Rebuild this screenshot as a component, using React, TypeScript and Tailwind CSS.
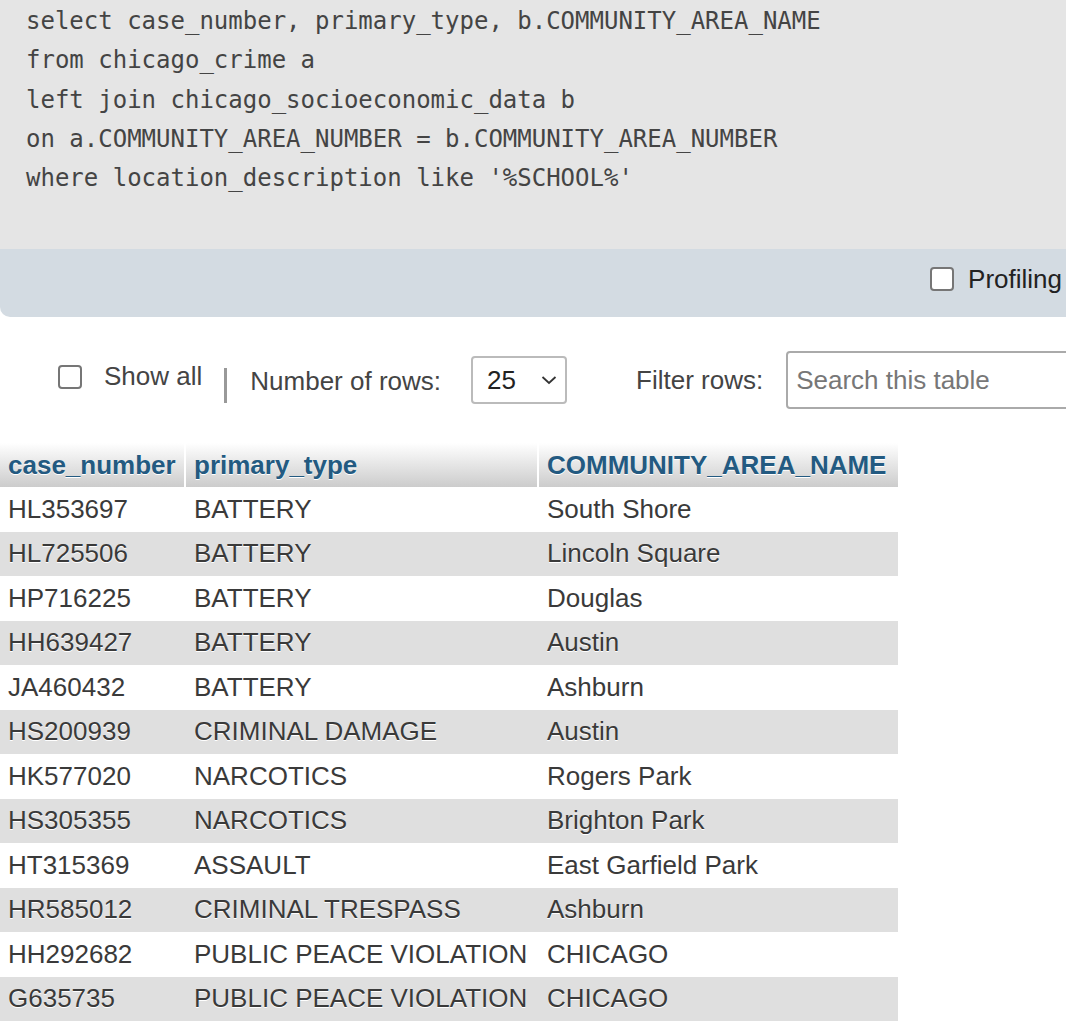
const sqlLines = [
  "select case_number, primary_type, b.COMMUNITY_AREA_NAME",
  "from chicago_crime a",
  "left join chicago_socioeconomic_data b",
  "on a.COMMUNITY_AREA_NUMBER = b.COMMUNITY_AREA_NUMBER",
  "where location_description like '%SCHOOL%'",
];

const rows = [
  ["HL353697", "BATTERY", "South Shore"],
  ["HL725506", "BATTERY", "Lincoln Square"],
  ["HP716225", "BATTERY", "Douglas"],
  ["HH639427", "BATTERY", "Austin"],
  ["JA460432", "BATTERY", "Ashburn"],
  ["HS200939", "CRIMINAL DAMAGE", "Austin"],
  ["HK577020", "NARCOTICS", "Rogers Park"],
  ["HS305355", "NARCOTICS", "Brighton Park"],
  ["HT315369", "ASSAULT", "East Garfield Park"],
  ["HR585012", "CRIMINAL TRESPASS", "Ashburn"],
  ["HH292682", "PUBLIC PEACE VIOLATION", "CHICAGO"],
  ["G635735", "PUBLIC PEACE VIOLATION", "CHICAGO"],
];

function Checkbox() {
  return (
    <div className="w-[24px] h-[24px] shrink-0 rounded-[4px] border-2 border-[#767676] bg-white" />
  );
}

export default function App() {
  return (
    <div className="w-[1066px] h-[1032px] overflow-hidden bg-white font-[Liberation_Sans,Arial,sans-serif] whitespace-nowrap">
      <div className="h-[249px] bg-[#e5e5e5] pl-[26px] pt-[2px]">
        <pre className="font-[DejaVu_Sans_Mono,monospace] text-[24px] leading-[39.3px] text-[#444]">
          {sqlLines.join("\n")}
        </pre>
      </div>

      <div className="h-[68px] bg-[#d3dbe2] rounded-bl-[10px] flex items-center justify-end pr-[4px] pb-[8px]">
        <Checkbox />
        <span className="ml-[14px] text-[26px] text-[#222]">Profiling</span>
      </div>

      <div className="mt-[33px] h-[60px] flex items-center text-[26px] text-[#444]">
        <div className="flex items-center pl-[58px] mb-[7px] shrink-0">
          <Checkbox />
          <span className="ml-[22px]">Show all</span>
        </div>
        <div className="ml-[22px] mt-[11px] w-[3px] h-[35px] shrink-0 bg-[#999]" />
        <span className="ml-[23px] mt-[2px] shrink-0">Number of rows:</span>
        <div className="ml-[30px] w-[96px] h-[48px] shrink-0 rounded-[4px] border-2 border-[#bbb] flex items-center pl-[14px] pr-[8px] justify-between text-[#222]">
          <span>25</span>
          <svg width="16" height="10" viewBox="0 0 16 10" fill="none">
            <path d="M1.5 2 L8 8 L14.5 2" stroke="#333" strokeWidth="1.8" />
          </svg>
        </div>
        <span className="ml-[69px] shrink-0">Filter rows:</span>
        <div className="ml-[23px] w-[320px] h-[58px] shrink-0 rounded-[4px] border-2 border-[#aaa] flex items-center pl-[8px] text-[#777]">
          Search this table
        </div>
      </div>

      <div className="mt-[33px] w-[898px] text-[26px]">
        <div className="grid grid-cols-[184px_351px_359px] gap-x-[2px] h-[44px]">
          {["case_number", "primary_type", "COMMUNITY_AREA_NAME"].map((h) => (
            <div
              key={h}
              className="flex items-center pl-[8px] bg-linear-to-b from-white to-[#cccccc] font-bold text-[#235a81] [text-shadow:0_1px_0_#fff]"
            >
              {h}
            </div>
          ))}
        </div>
        {rows.map((r, i) => (
          <div
            key={r[0] + i}
            className={`grid grid-cols-[184px_351px_359px] gap-x-[2px] h-[44.5px] text-[#3a3a3a] [text-shadow:0_1px_0_#fff] ${
              i % 2 === 1 ? "bg-[#dfdfdf]" : "bg-white"
            }`}
          >
            {r.map((c, j) => (
              <div key={j} className="flex items-center pl-[8px]">
                {c}
              </div>
            ))}
          </div>
        ))}
      </div>
    </div>
  );
}
